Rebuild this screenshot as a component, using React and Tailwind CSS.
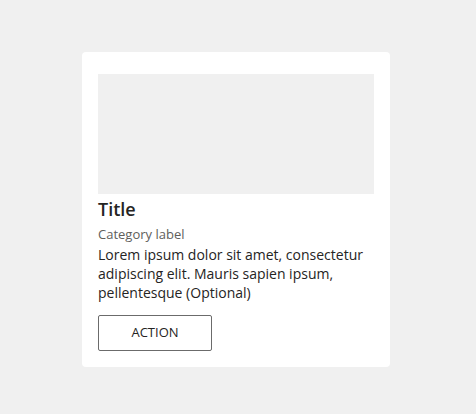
export default function App() {
  return (
    <div
      className="min-h-[414px] w-full bg-[#f0f0f0] pl-[82px] pt-[52px]"
      style={{ fontFamily: '"Open Sans", "Noto Sans", sans-serif' }}
    >
      <div className="flex w-[308px] flex-col rounded-[4px] bg-white px-4 pb-4 pt-[22px]">
        <div className="h-[120px] w-full bg-[#f0f0f0]" />
        <h2 className="mt-[3px] text-[18px] font-semibold leading-[24px] text-[#252423]">Title</h2>
        <p className="mt-1 text-[13px] leading-[18px] text-[#605e5c]">Category label</p>
        <p className="mt-[2px] text-[14px] leading-[19px] text-[#252423]">
          Lorem ipsum dolor sit amet, consectetur adipiscing elit. Mauris sapien ipsum,
          pellentesque (Optional)
        </p>
        <button
          type="button"
          className="mt-[13px] h-9 w-[114px] rounded-[2px] border border-[#6b6b6b] bg-white text-[13px] text-[#252423]"
        >
          ACTION
        </button>
      </div>
    </div>
  );
}
